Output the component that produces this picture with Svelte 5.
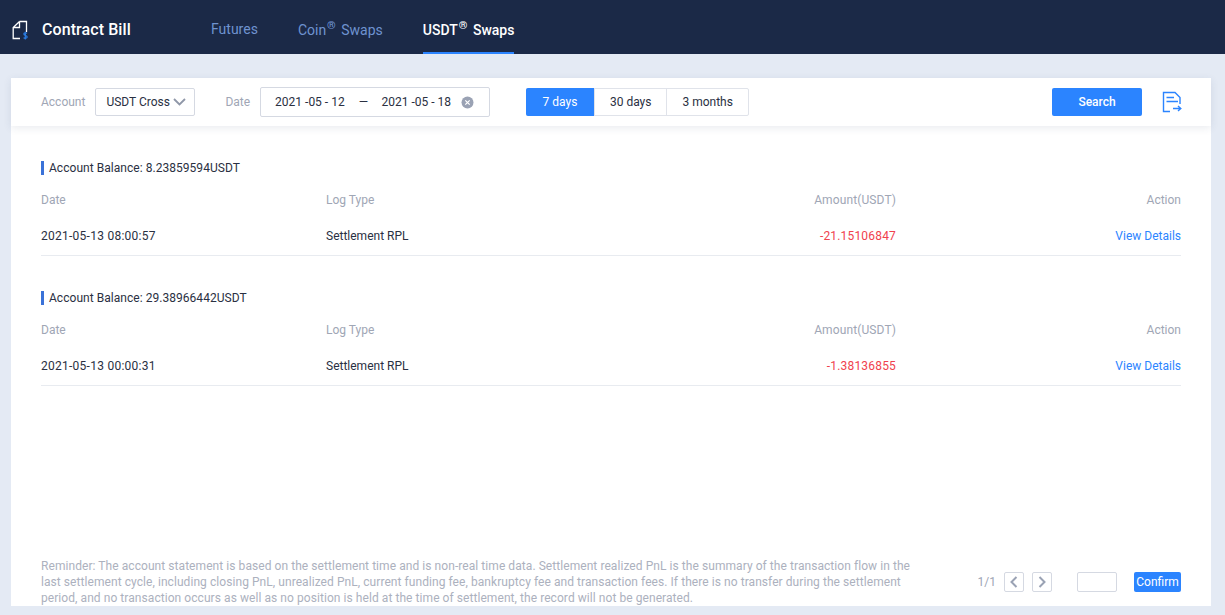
<script lang="ts">
  const ranges = ['7 days', '30 days', '3 months'];
  const groups = [
    { balance: '8.23859594', date: '2021-05-13 08:00:57', type: 'Settlement RPL', amount: '-21.15106847' },
    { balance: '29.38966442', date: '2021-05-13 00:00:31', type: 'Settlement RPL', amount: '-1.38136855' }
  ];
</script>

<div class="page">
  <header class="topbar">
    <div class="brand">
      <svg class="brand-icon" width="20" height="20" viewBox="0 0 20 20" fill="none">
        <path d="M8.500 1.500h7V12M8.500 1.500L2.200 7.500v11H9M8.500 1.500V7.500H2.200" stroke="#fff" stroke-width="1.300" />
        <path d="M16 13.300c-.6-.8-3.200-1-3.200.7 0 1.800 3.400 1.100 3.400 3 0 1.700-2.900 1.600-3.600.6M14.300 11.800v7.700" stroke="#2b7fe8" stroke-width="1.100" />
      </svg>
      <span class="title">Contract Bill</span>
    </div>
    <nav class="tabs">
      <span class="tab first">Futures</span>
      <span class="tab">Coin<i class="reg">®</i> Swaps</span>
      <span class="tab active">USDT<i class="reg">®</i> Swaps</span>
    </nav>
  </header>

  <main class="card">
    <div class="toolbar">
      <span class="label">Account</span>
      <div class="select">
        <span>USDT Cross</span>
        <svg width="13" height="8" viewBox="0 0 13 8" fill="none"><path d="M1 1l5.500 5.500L12 1" stroke="#8f97a8" stroke-width="1.800" /></svg>
      </div>
      <span class="label date-label">Date</span>
      <div class="dates">
        <span class="date">2021 -05 - 12</span>
        <span class="dash">—</span>
        <span class="date">2021 -05 - 18</span>
        <svg class="clear" width="13" height="13" viewBox="0 0 13 13"><circle cx="6.500" cy="6.500" r="6" fill="#9aa2b4" /><path d="M4.300 4.300l4.400 4.400M8.700 4.300l-4.400 4.400" stroke="#fff" stroke-width="1.200" /></svg>
      </div>
      <div class="ranges">
        {#each ranges as r, i}
          <span class="range" class:on={i === 0}>{r}</span>
        {/each}
      </div>
      <button class="search">Search</button>
      <svg class="export" width="20" height="22" viewBox="0 0 20 22" fill="none">
        <path d="M8 20.500H1.500V1.500H13l5 5V13" stroke="#2b84ff" stroke-width="1.400" />
        <path d="M4.500 6.500H12M4.500 10.500H16M11 17.500H19M16 15l2.800 2.500L16 20" stroke="#2b84ff" stroke-width="1.400" />
      </svg>
    </div>

    <div class="content">
      {#each groups as g}
        <section class="group">
          <h3 class="balance">Account Balance: {g.balance}USDT</h3>
          <div class="row head">
            <span>Date</span><span>Log Type</span><span class="amount">Amount(USDT)</span><span class="action">Action</span>
          </div>
          <div class="row body">
            <span class="stamp">{g.date}</span><span>{g.type}</span><span class="amount neg">{g.amount}</span><span class="action link">View Details</span>
          </div>
        </section>
      {/each}
    </div>

    <footer class="foot">
      <p class="note">Reminder: The account statement is based on the settlement time and is non-real time data. Settlement realized PnL is the summary of the transaction flow in the last settlement cycle, including closing PnL, unrealized PnL, current funding fee, bankruptcy fee and transaction fees. If there is no transfer during the settlement period, and no transaction occurs as well as no position is held at the time of settlement, the record will not be generated.</p>
      <div class="pager">
        <span class="count">1/1</span>
        <span class="arrow"><svg width="10" height="12" viewBox="0 0 10 12" fill="none"><path d="M7.500 1L2.500 6l5 5" stroke="#9aa2b4" stroke-width="2" /></svg></span>
        <span class="arrow next"><svg width="10" height="12" viewBox="0 0 10 12" fill="none"><path d="M2.500 1l5 5-5 5" stroke="#9aa2b4" stroke-width="2" /></svg></span>
        <span class="page-input"></span>
        <button class="confirm">Confirm</button>
      </div>
    </footer>
  </main>
</div>

<style>
  :global(body) {
    margin: 0;
    background: #e4eaf4;
    font-family: Roboto, "Liberation Sans", sans-serif;
    font-size: 12px;
    color: #2a3042;
  }
  .page {
    height: 615px;
    overflow: hidden;
  }
  .topbar {
    height: 54px;
    background: #1b2947;
    display: flex;
    align-items: stretch;
  }
  .brand {
    display: flex;
    align-items: center;
    width: 211px;
    padding: 4px 0 0 11px;
    box-sizing: border-box;
  }
  .brand-icon {
    margin: 2px 11px 0 0;
  }
  .title {
    font-size: 16px;
    font-weight: 500;
    letter-spacing: 0.08px;
    color: #fff;
  }
  .tabs {
    display: flex;
    gap: 40px;
  }
  .tab {
    font-size: 14px;
    color: #6f93d0;
    line-height: 60px;
    height: 54px;
    box-sizing: border-box;
  }
  .tab.first {
    line-height: 58px;
  }
  .tab.active {
    color: #fff;
    font-weight: 500;
    border-bottom: 2px solid #2b84ff;
  }
  .reg {
    font-style: normal;
    font-weight: 700;
    font-size: 11px;
    margin: 0 2px 0 1px;
    position: relative;
    top: -6px;
  }
  .card {
    margin: 24px 14px 0 11px;
    height: 528px;
    background: #fff;
    display: flex;
    flex-direction: column;
  }
  .toolbar {
    height: 48px;
    display: flex;
    align-items: center;
    padding: 0 29px 0 30px;
    box-shadow: 0 2px 8px rgba(40, 60, 100, 0.1);
  }
  .label {
    color: #a0a6b5;
    margin-right: 10px;
  }
  .date-label {
    margin-left: 30px;
  }
  .select {
    width: 100px;
    height: 28px;
    box-sizing: border-box;
    border: 1px solid #d5d9e2;
    border-radius: 2px;
    display: flex;
    align-items: center;
    justify-content: space-between;
    padding: 0 8px 0 10px;
  }
  .dates {
    width: 230px;
    height: 30px;
    box-sizing: border-box;
    border: 1px solid #d5d9e2;
    border-radius: 2px;
    display: flex;
    align-items: center;
    padding: 0 15px 0 14px;
  }
  .date {
    white-space: pre;
  }
  .dash {
    margin: 0 13.500px 0 14px;
  }
  .clear {
    margin-left: auto;
  }
  .ranges {
    display: flex;
    margin-left: 36px;
    height: 28px;
    border: 1px solid #e0e3ea;
    border-radius: 2px;
    box-sizing: border-box;
  }
  .range {
    padding: 0 15px;
    line-height: 26px;
    border-left: 1px solid #e0e3ea;
  }
  .range:first-child {
    border-left: 0;
  }
  .range.on {
    background: #2b84ff;
    color: #fff;
    margin: -1px 0 -1px -1px;
    line-height: 28px;
    padding: 0 16.500px;
    border-radius: 2px 0 0 2px;
  }
  button {
    font: inherit;
    border: 0;
    background: #2b84ff;
    color: #fff;
    border-radius: 2px;
    padding: 0;
  }
  .search {
    width: 90px;
    height: 28px;
    font-weight: 500;
    margin-left: auto;
  }
  .export {
    margin-left: 20px;
  }
  .content {
    flex: 1;
    padding: 35px 30px 0 30px;
  }
  .group {
    margin-bottom: 35px;
  }
  .balance {
    margin: 0;
    font-size: 12px;
    font-weight: 400;
    line-height: 14px;
    letter-spacing: 0.04px;
    border-left: 3px solid #3a72d8;
    padding-left: 5px;
    height: 14px;
  }
  .row {
    display: grid;
    grid-template-columns: 285px 1fr 1fr 285px;
    align-items: center;
  }
  .head {
    height: 34px;
    margin-top: 8px;
    color: #a0a6b5;
  }
  .body {
    height: 38px;
    border-bottom: 1px solid #e8ebf0;
  }
  .stamp {
    letter-spacing: 0.26px;
  }
  .amount, .action {
    text-align: right;
  }
  .amount {
    letter-spacing: 0.12px;
  }
  .neg {
    letter-spacing: 0.18px;
    color: #f0424e;
  }
  .link {
    color: #2b84ff;
  }
  .foot {
    display: flex;
    justify-content: space-between;
    align-items: center;
    padding: 5px 30px 0 30px;
    height: 48px;
  }
  .note {
    margin: 0;
    width: 880px;
    color: #acb1be;
    line-height: 16px;
    letter-spacing: 0.065px;
  }
  .pager {
    display: flex;
    align-items: center;
    height: 20px;
  }
  .count {
    color: #a0a6b5;
    margin-right: 8px;
  }
  .arrow {
    width: 20px;
    height: 20px;
    box-sizing: border-box;
    border: 1px solid #d5d9e2;
    border-radius: 2px;
    display: flex;
    align-items: center;
    justify-content: center;
  }
  .next {
    margin-left: 8px;
  }
  .page-input {
    width: 40px;
    height: 20px;
    box-sizing: border-box;
    border: 1px solid #d5d9e2;
    border-radius: 2px;
    margin-left: 25px;
  }
  .confirm {
    width: 47px;
    height: 20px;
    margin-left: 17px;
  }
</style>
